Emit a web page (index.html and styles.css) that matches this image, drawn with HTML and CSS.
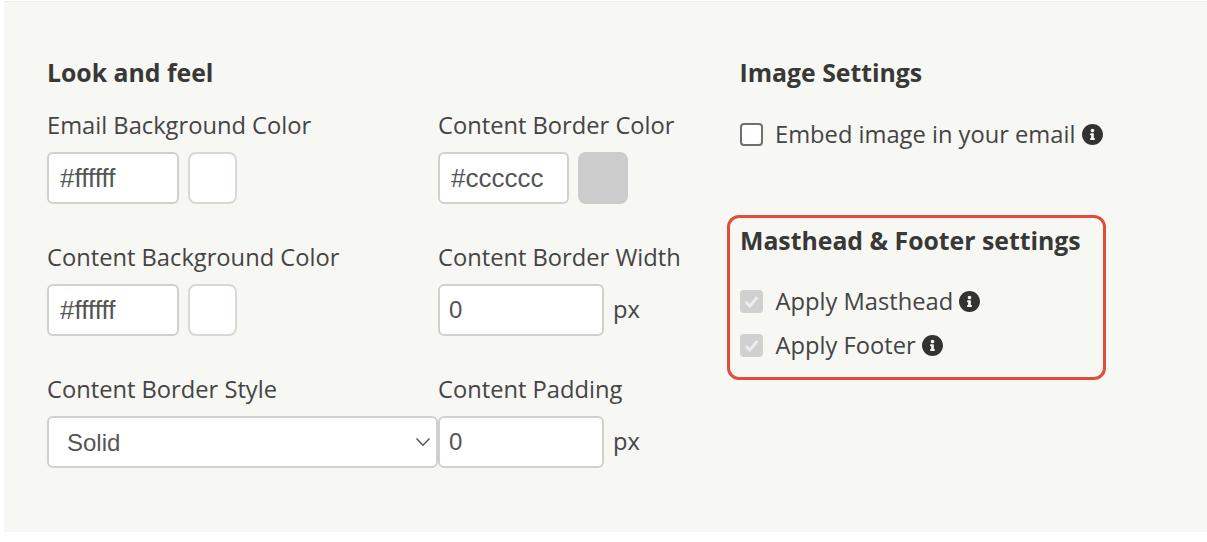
FILE: index.html
```html
<!DOCTYPE html>
<html lang="en">
<head>
<meta charset="utf-8">
<title>Look and feel</title>
<link rel="stylesheet" href="styles.css">
</head>
<body>
<svg class="sprite" width="0" height="0" aria-hidden="true">
  <symbol id="info" viewBox="8 8 496 496"><path d="M256 8C119.043 8 8 119.083 8 256c0 136.997 111.043 248 248 248s248-111.003 248-248C504 119.083 392.957 8 256 8zm0 110c23.196 0 42 18.804 42 42s-18.804 42-42 42-42-18.804-42-42 18.804-42 42-42zm56 254c0 6.627-5.373 12-12 12h-88c-6.627 0-12-5.373-12-12v-24c0-6.627 5.373-12 12-12h12v-64h-12c-6.627 0-12-5.373-12-12v-24c0-6.627 5.373-12 12-12h64c6.627 0 12 5.373 12 12v100h12c6.627 0 12 5.373 12 12v24z"/></symbol>
</svg>
<main class="panel">
  <section class="look">
    <h2 class="heading">Look and feel</h2>
    <div class="grid">
      <div class="field">
        <label class="label">Email Background Color</label>
        <div class="controls">
          <input class="input input-color" value="#ffffff">
          <span class="swatch swatch-white"></span>
        </div>
      </div>
      <div class="field">
        <label class="label">Content Border Color</label>
        <div class="controls">
          <input class="input input-color input-narrow" value="#cccccc">
          <span class="swatch swatch-grey"></span>
        </div>
      </div>
      <div class="field">
        <label class="label">Content Background Color</label>
        <div class="controls">
          <input class="input input-color" value="#ffffff">
          <span class="swatch swatch-white"></span>
        </div>
      </div>
      <div class="field">
        <label class="label">Content Border Width</label>
        <div class="controls">
          <input class="input input-num" value="0">
          <span class="unit">px</span>
        </div>
      </div>
      <div class="field">
        <label class="label">Content Border Style</label>
        <div class="select-wrap">
          <select class="select"><option>Solid</option></select>
          <svg class="chevron" viewBox="0 0 16 10" aria-hidden="true"><path d="M1.5 1.5 8 8.2l6.5-6.7"/></svg>
        </div>
      </div>
      <div class="field">
        <label class="label">Content Padding</label>
        <div class="controls">
          <input class="input input-num" value="0">
          <span class="unit">px</span>
        </div>
      </div>
    </div>
  </section>
  <aside class="side">
    <h2 class="heading">Image Settings</h2>
    <div class="check-row check-embed">
      <span class="box"></span>
      <span class="check-text">Embed image in your email</span>
      <svg class="info"><use href="#info"/></svg>
    </div>
    <div class="highlight">
      <h2 class="heading">Masthead &amp; Footer settings</h2>
      <div class="check-row check-first">
        <span class="box box-on"><svg viewBox="0 0 24 24" aria-hidden="true"><path d="M6 12.5l4.2 4.3L18 7.5"/></svg></span>
        <span class="check-text">Apply Masthead</span>
        <svg class="info"><use href="#info"/></svg>
      </div>
      <div class="check-row check-second">
        <span class="box box-on"><svg viewBox="0 0 24 24" aria-hidden="true"><path d="M6 12.5l4.2 4.3L18 7.5"/></svg></span>
        <span class="check-text">Apply Footer</span>
        <svg class="info"><use href="#info"/></svg>
      </div>
    </div>
  </aside>
</main>
</body>
</html>
```

FILE: styles.css
```css
* { box-sizing: border-box; }
html, body { margin: 0; background: #ffffff; }
body {
  width: 1207px;
  height: 542px;
  overflow: hidden;
  padding: 1px 0 10px 4px;
  font-family: "Open Sans", "Liberation Sans", sans-serif;
  color: #3b3b3a;
}
.sprite { position: absolute; }
.panel {
  display: flex;
  height: 531px;
  background: #f7f7f4;
  border-top: 1px solid #ececea;
  padding: 54px 0 0 43px;
}
.look { width: 692.5px; }
.heading {
  margin: 0;
  font-size: 24.8px;
  line-height: 32px;
  font-weight: 700;
  color: #383837;
}
.grid {
  display: grid;
  grid-template-columns: 391px 300px;
  grid-auto-rows: 132px;
  margin-top: 21px;
}
.label {
  display: block;
  font-size: 23.7px;
  line-height: 32px;
  height: 43px;
  color: #444444;
}
.controls, .select-wrap { display: flex; align-items: center; height: 52px; }
.select-wrap { position: relative; }
.input, .select {
  height: 52px;
  margin: 0;
  border: 2px solid #d0d0ce;
  border-radius: 6px;
  background: #ffffff;
  font-family: "Liberation Sans", Arial, sans-serif;
  font-size: 24px;
  color: #555555;
  outline: none;
}
.input { padding: 0 9px; }
.input-color { width: 132px; padding: 0 11px; font-size: 26px; }
.input-narrow { width: 131px; }
.input-num { width: 166px; }
.swatch {
  width: 49px;
  height: 52px;
  margin-left: 9px;
  border-radius: 8px;
  border: 2px solid #d8d8d6;
}
.swatch-white { background: #ffffff; }
.swatch-grey { width: 50px; background: #cccccc; border-color: #cccccc; }
.unit { margin-left: 9px; padding-bottom: 2px; font-size: 23.7px; color: #444444; }
.select {
  width: 391px;
  padding: 0 0 0 18px;
  appearance: none;
}
.chevron {
  position: absolute;
  left: 368px;
  top: 21px;
  width: 16px;
  height: 10px;
  fill: none;
  stroke: #555555;
  stroke-width: 1.5;
}
.side { width: 380px; }
.check-row {
  display: flex;
  align-items: center;
  font-size: 23.7px;
  line-height: 32px;
  color: #444444;
}
.check-embed { margin-top: 30px; }
.box {
  flex: none;
  width: 23px;
  height: 23px;
  margin-right: 12.5px;
  background: #ffffff;
  border: 2px solid #6f6f6f;
  border-radius: 4px;
}
.box-on {
  background: #d0d0d0;
  border: 0;
  display: flex;
}
.box-on svg {
  width: 23px;
  height: 23px;
  fill: none;
  stroke: #eeeeee;
  stroke-width: 3;
}
.info {
  flex: none;
  width: 21px;
  height: 21px;
  margin-left: 7px;
  fill: #333332;
}
.highlight {
  width: 379px;
  height: 165px;
  margin: 65px 0 0 -12.5px;
  padding: 6px 0 0 10px;
  border: 3px solid #e24c3a;
  border-radius: 12px;
}
.highlight .info { margin-left: 6px; }
.check-first { margin-top: 29px; }
.check-second { margin-top: 12px; }
```
